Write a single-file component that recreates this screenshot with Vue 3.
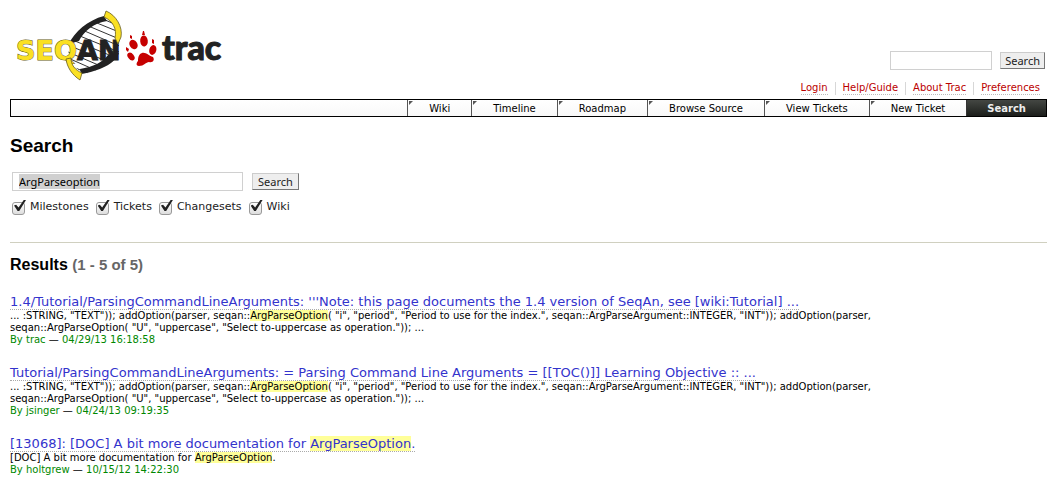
<script setup>
import { onMounted, ref } from 'vue'

const metaLinks = ['Login', 'Help/Guide', 'About Trac', 'Preferences']
const navItems = ['Wiki', 'Timeline', 'Roadmap', 'Browse Source', 'View Tickets', 'New Ticket', 'Search']

const query = ref('ArgParseoption')
const quickQuery = ref('')
const field = ref(null)
const filters = ref([
  { id: 'milestone', label: 'Milestones', on: true },
  { id: 'ticket', label: 'Tickets', on: true },
  { id: 'changeset', label: 'Changesets', on: true },
  { id: 'wiki', label: 'Wiki', on: true },
])

const optionExcerpt = [
  '... :STRING, "TEXT")); addOption(parser, seqan::',
  'ArgParseOption',
  '( "i", "period", "Period to use for the index.", seqan::ArgParseArgument::INTEGER, "INT")); addOption(parser, seqan::ArgParseOption( "U", "uppercase", "Select to-uppercase as operation.")); ...',
]

/* Odd parts of a title or an excerpt are the matched words. */
const results = [
  {
    title: ["1.4/Tutorial/ParsingCommandLineArguments: '''Note: this page documents the 1.4 version of SeqAn, see [wiki:Tutorial] ..."],
    excerpt: optionExcerpt,
    author: 'By trac',
    date: '04/29/13 16:18:58',
  },
  {
    title: ['Tutorial/ParsingCommandLineArguments: = Parsing Command Line Arguments = [[TOC()]] Learning Objective :: ...'],
    excerpt: optionExcerpt,
    author: 'By jsinger',
    date: '04/24/13 09:19:35',
  },
  {
    title: ['[13068]: [DOC] A bit more documentation for ', 'ArgParseOption', '.'],
    excerpt: ['[DOC] A bit more documentation for ', 'ArgParseOption', '.'],
    author: 'By holtgrew',
    date: '10/15/12 14:22:30',
  },
]

onMounted(() => {
  field.value.focus()
  field.value.select()
})
</script>

<template>
  <div class="page">
    <header class="banner">
      <a class="logo" href="#" aria-label="SeqAn trac">
        <svg width="220" height="84" viewBox="10 4 220 84">
          <defs>
            <clipPath id="helix">
              <path d="M68 50C70 38 86 22 105 17Q116 22 119 36L119 54Q108 68 84 74Q70 66 68 50Z" />
            </clipPath>
          </defs>
          <g clip-path="url(#helix)" stroke="#333" stroke-width="1">
            <path d="M98 17L124 28M92 21L124 34M86 25L124 41M80 29L124 48M75 34L124 54M70 39L124 61M68 45L118 66M68 52L110 70M68 58L102 73M68 65L95 76" />
          </g>
          <path d="M69 44C74 32 88 20 104 16L107 21C94 23 84 31 79 41Z" fill="#222" />
          <path d="M119 53C115 64 99 71 81 74L80 69C93 67 103 62 108 55Z" fill="#222" />
          <text class="an" x="77" y="60">AN</text>
          <text class="seq" x="16" y="60">SEQ</text>
          <path d="M106 11C116 15 123 27 121 37L118 44L115 38C117 29 113 21 104 17Z" fill="#fae022" stroke="#665c20" stroke-width=".8" />
          <path d="M66 59C67 67 72 75 80 80L82 73C75 70 71 65 71 58Z" fill="#fae022" stroke="#665c20" stroke-width=".8" />
          <g fill="#c60000">
            <path d="M142 53C146 52 149 56 153 57C155 60 153 63 149 62C146 62 144 66 139 66C136 66 136 63 138 61C138 57 139 54 142 53Z" />
            <ellipse cx="144" cy="41" rx="3.800" ry="5.500" transform="rotate(-6 144 41)" />
            <ellipse cx="133.500" cy="44.500" rx="3.800" ry="5" transform="rotate(-35 133.500 44.500)" />
            <ellipse cx="152.800" cy="50" rx="3.500" ry="5" transform="rotate(16 152.800 50)" />
            <ellipse cx="131" cy="56.500" rx="3" ry="4.400" transform="rotate(-38 131 56.500)" />
            <path d="M143 31L144 31L145 35L142 35ZM130 35L132 36L132 39L130 38ZM152 39L154 40L154 44L152 43ZM126 47L129 49L128 52L126 50Z" />
          </g>
          <text class="trac" x="162" y="60">trac</text>
        </svg>
      </a>
      <div class="tools">
        <form class="quick" @submit.prevent>
          <input v-model="quickQuery" type="text" class="text quick-text" aria-label="Quick search">
          <button class="btn">Search</button>
        </form>
        <nav class="meta" aria-label="Account">
          <span v-for="link in metaLinks" :key="link" class="meta-item"><a href="#">{{ link }}</a></span>
        </nav>
      </div>
    </header>

    <nav class="mainnav" aria-label="Main">
      <a v-for="item in navItems" :key="item" href="#" :class="{ active: item === 'Search' }">{{ item }}</a>
    </nav>

    <main>
      <h1>Search</h1>
      <form class="search" @submit.prevent>
        <div class="row">
          <input ref="field" v-model="query" type="text" class="text query" aria-label="Search terms">
          <button class="btn">Search</button>
        </div>
        <div class="filters">
          <span v-for="f in filters" :key="f.id" class="filter">
            <input :id="f.id" v-model="f.on" type="checkbox">
            <label :for="f.id">{{ f.label }}</label>
          </span>
        </div>
      </form>
      <hr>
      <h2>Results <span>(1 - 5 of 5)</span></h2>
      <dl>
        <template v-for="r in results" :key="r.date">
          <dt><a href="#"><template v-for="(p, i) in r.title" :key="i"><mark v-if="i % 2">{{ p }}</mark><template v-else>{{ p }}</template></template></a></dt>
          <dd class="excerpt"><template v-for="(p, i) in r.excerpt" :key="i"><mark v-if="i % 2">{{ p }}</mark><template v-else>{{ p }}</template></template></dd>
          <dd class="byline"><span>{{ r.author }}</span> — <span>{{ r.date }}</span></dd>
        </template>
      </dl>
    </main>
  </div>
</template>

<style>
body {
  background: #fff;
}
</style>

<style scoped>
.page {
  padding: 4px 10px 10px;
  font: 10px/12px Verdana, "DejaVu Sans", sans-serif;
  color: #000;
}
.banner {
  display: flex;
  justify-content: space-between;
  align-items: flex-end;
  height: 95px;
}
.logo {
  align-self: flex-start;
}
.logo svg {
  display: block;
}
.seq, .an {
  font: bold 27px "DejaVu Sans", sans-serif;
}
.seq {
  fill: #fae022;
  stroke: #665c20;
  stroke-width: 1px;
  paint-order: stroke;
}
.an, .trac {
  fill: #222;
  stroke: #222;
  stroke-width: 1px;
}
.trac {
  font: 900 34px Lato, sans-serif;
}
.quick {
  display: flex;
  justify-content: flex-end;
  align-items: center;
  gap: 8px;
  margin: 0 2px 12px 0;
}
.text {
  box-sizing: border-box;
  height: 19px;
  padding: 0 6px;
  border: 1px solid #d0d0d0;
  outline: none;
  background: #fff;
  color: #000;
  font: 11px "Noto Sans", sans-serif;
}
.text::selection {
  background: #d0d0d0;
  color: #000;
}
.quick-text {
  width: 102px;
}
.btn {
  box-sizing: border-box;
  height: 17px;
  padding: 0 5px;
  border: 1px solid;
  border-color: #ccc #777 #777 #ccc;
  background: #eee;
  color: #222;
  font: 11px/14px "Noto Sans", sans-serif;
}
.quick .btn {
  padding: 0 4px;
}
.meta {
  display: flex;
  justify-content: flex-end;
  margin-bottom: 4px;
}
.meta-item {
  padding: 0 7px;
  border-left: 1px solid #d7d7d7;
  line-height: 12px;
}
.meta-item:first-child {
  border-left: 0;
}
.meta a {
  display: block;
  border-bottom: 1px dotted #bbb;
  color: #b00;
  text-decoration: none;
}
.mainnav {
  display: flex;
  justify-content: flex-end;
  border: 1px solid #000;
  background: linear-gradient(#fff, #f8f8f8);
}
.mainnav a {
  position: relative;
  padding: 1px 21px 0;
  border-left: 1px solid #555;
  color: #000;
  line-height: 15px;
  text-decoration: none;
}
.mainnav a::before {
  content: "";
  position: absolute;
  left: 1px;
  top: 1px;
  border-top: 4px solid #555;
  border-right: 4px solid transparent;
}
.mainnav .active {
  padding: 1px 20px 0;
  border-left-color: #333;
  background: linear-gradient(#444743, #1c1e1b);
  color: #eee;
  font-weight: bold;
}
.mainnav .active::before {
  display: none;
}
h1, h2 {
  margin: 0;
  font-family: Arial, "Liberation Sans", sans-serif;
}
h1 {
  margin-top: 18px;
  font-size: 19px;
  line-height: 22px;
}
.search {
  padding: 15px 2px 0;
}
.row {
  display: flex;
  align-items: center;
  gap: 9px;
}
.query {
  width: 231px;
}
.filters {
  display: flex;
  gap: 7px;
  margin-top: 8px;
  font-size: 11px;
  line-height: 16px;
}
.filter {
  display: flex;
  align-items: center;
  gap: 5px;
  color: #222;
}
.filter input {
  position: relative;
  width: 13px;
  height: 13px;
  margin: 2px 0 0;
  appearance: none;
  border: 1px solid #999;
  border-radius: 3px;
  background: linear-gradient(#fff, #ddd);
}
.filter input:checked::before {
  content: "";
  position: absolute;
  left: 1px;
  top: -3px;
  width: 12px;
  height: 12px;
  background: #222;
  clip-path: polygon(0 50%, 18% 44%, 38% 66%, 84% 0, 100% 4%, 44% 96%, 30% 96%);
}
hr {
  height: 1px;
  margin: 27px 0 0;
  border: 0;
  background: #d0d0c0;
}
h2 {
  margin-top: 12px;
  font-size: 16px;
  line-height: 20px;
}
h2 span {
  color: #666;
  font-size: 15px;
}
dl {
  margin: 18px 0 0;
}
dt {
  font-size: 13px;
  line-height: 17px;
}
dt a {
  border-bottom: 1px dotted #aaa;
  color: #33c;
  text-decoration: none;
}
dd {
  max-width: 920px;
  margin: 0;
}
.byline {
  margin-bottom: 18px;
}
.byline span {
  color: #080;
}
mark {
  background: #ff9;
  color: inherit;
}
</style>
